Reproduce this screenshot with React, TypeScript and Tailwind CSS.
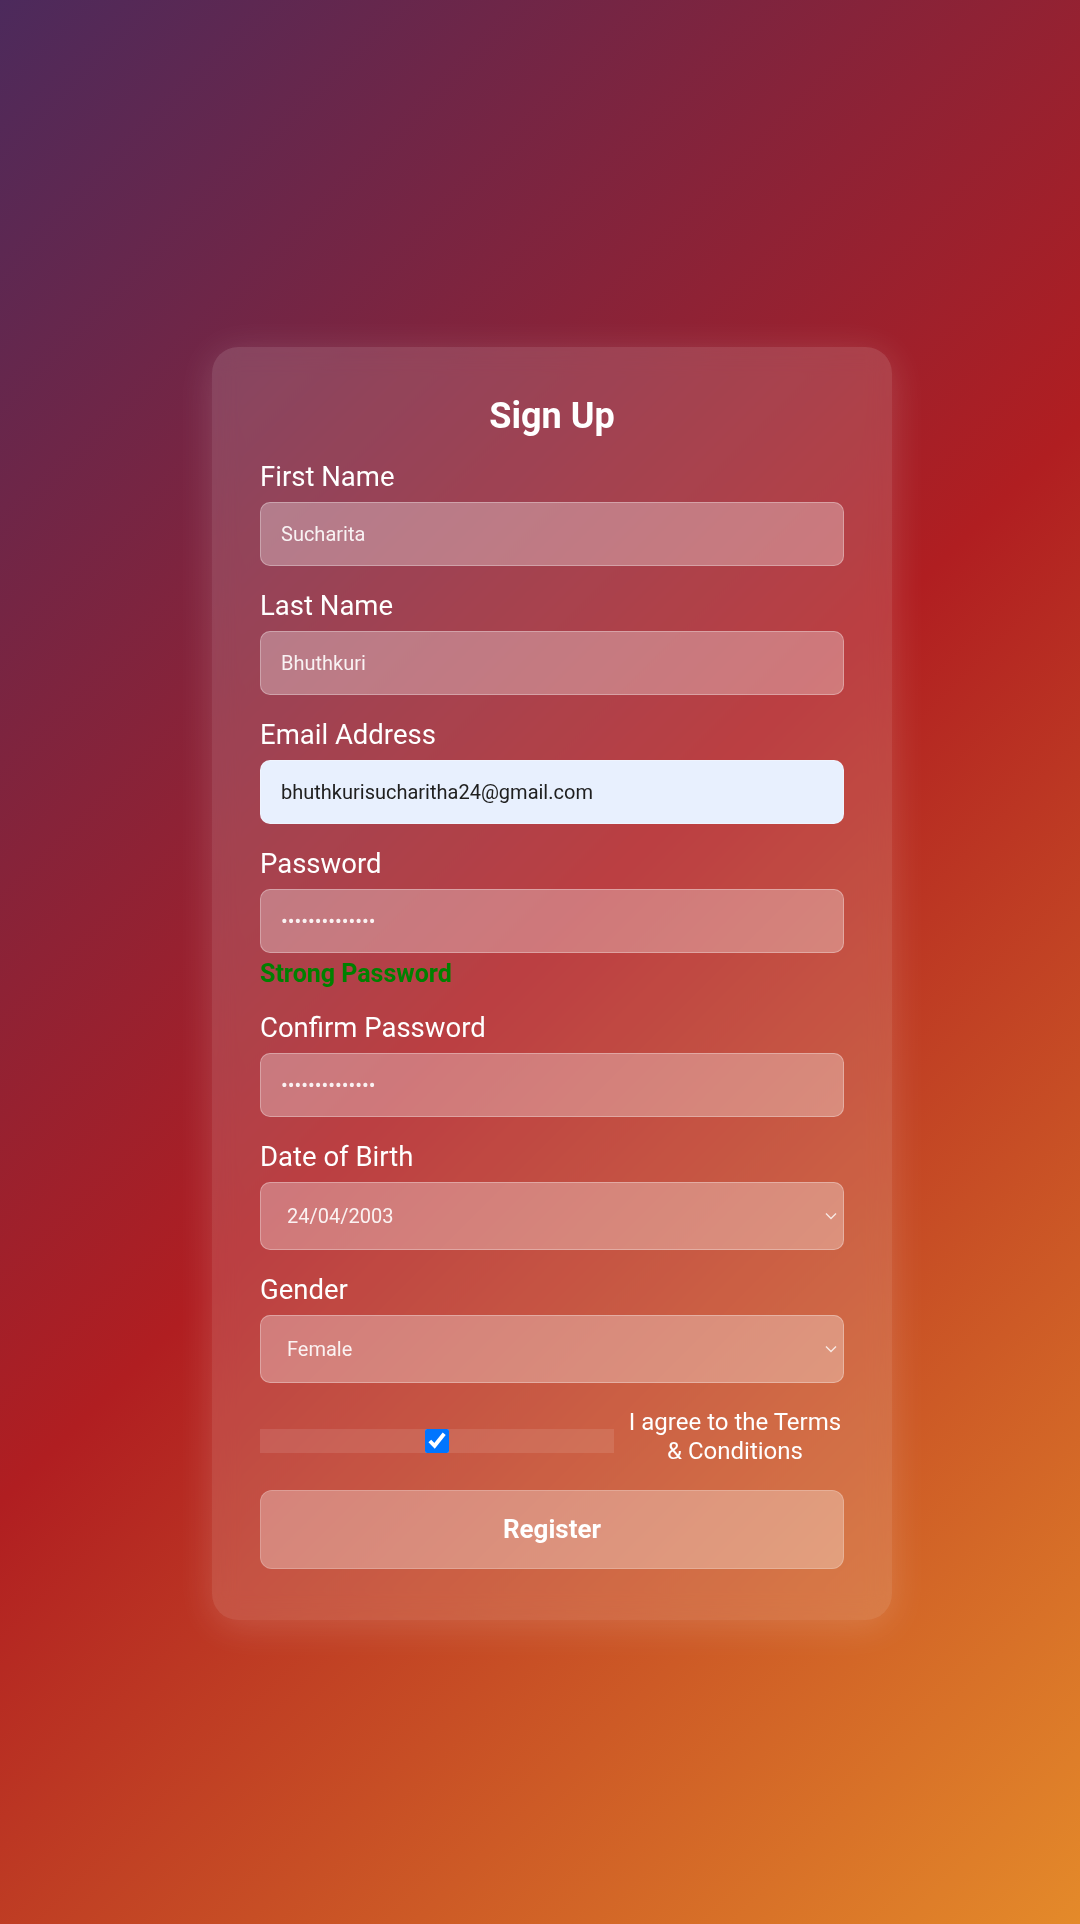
import React from "react";

function Field({ label, children }: { label: string; children: React.ReactNode }) {
  return (
    <div className="mb-[25px]">
      <label className="block text-[27.5px] leading-[30px] text-white mb-[10px]">{label}</label>
      {children}
    </div>
  );
}

const inputCls =
  "block w-full h-[64px] px-[20px] rounded-[10px] border border-white/30 bg-white/30 text-[20px] text-white/90 outline-none";

function Select({ value }: { value: string }) {
  return (
    <div className="relative">
      <select
        defaultValue={value}
        className="block w-full h-[68px] pl-[26px] pr-[40px] rounded-[10px] border border-white/30 bg-white/30 text-[20px] text-white/90 outline-none appearance-none"
      >
        <option value={value}>{value}</option>
      </select>
      {/* native arrow replaced by a drawn chevron */}
      <svg
        className="absolute right-[7px] top-1/2 -translate-y-1/2 pointer-events-none"
        width="12"
        height="8"
        viewBox="0 0 12 8"
        fill="none"
      >
        <polyline points="1,1.5 6,6.5 11,1.5" stroke="rgba(255,255,255,0.8)" strokeWidth="1.4" />
      </svg>
    </div>
  );
}

export default function App() {
  return (
    <div className="min-h-screen w-full bg-[linear-gradient(135deg,#4c2a5c_0%,#b01e21_50%,#e48a2a_100%)] font-[Roboto,sans-serif] flex justify-center pl-[24px] pt-[347px] pb-[304px]">
      <div className="w-[680px] rounded-[26px] bg-white/15 backdrop-blur-md shadow-[0_6px_36px_rgba(255,255,255,0.16)] px-[48px] pt-[48px] pb-[51px]">
        <h2 className="text-center text-[36px] leading-[43px] font-bold text-white mb-[24px]">Sign Up</h2>

        <Field label="First Name">
          <input type="text" defaultValue="Sucharita" className={inputCls} />
        </Field>

        <Field label="Last Name">
          <input type="text" defaultValue="Bhuthkuri" className={inputCls} />
        </Field>

        <Field label="Email Address">
          <input
            type="email"
            defaultValue="bhuthkurisucharitha24@gmail.com"
            className="block w-full h-[64px] px-[20px] rounded-[10px] border border-white/30 bg-[#e8f0fe] text-[20px] text-[#1f1f1f] outline-none"
          />
        </Field>

        <div className="mb-[25px]">
          <label className="block text-[27.5px] leading-[30px] text-white mb-[10px]">Password</label>
          <input type="password" defaultValue="Sucharita@2003" className={inputCls} />
          <p className="mt-[7px] text-[25px] leading-[28px] font-bold text-[#008000]">Strong Password</p>
        </div>

        <Field label="Confirm Password">
          <input type="password" defaultValue="Sucharita@2003" className={inputCls} />
        </Field>

        <Field label="Date of Birth">
          <Select value="24/04/2003" />
        </Field>

        <Field label="Gender">
          <Select value="Female" />
        </Field>

        <div className="flex items-center gap-[12px] mb-[24px]">
          <div className="flex-1 h-[24px] mt-[7px] bg-white/10 flex items-center justify-center">
            <input type="checkbox" defaultChecked className="w-[24px] h-[24px] accent-[#0075ff]" />
          </div>
          <span className="w-[218px] text-center text-[24px] leading-[29px] text-white">
            I agree to the Terms &amp; Conditions
          </span>
        </div>

        <button className="block w-full h-[79px] rounded-[12px] border border-white/20 bg-white/30 text-[26px] font-bold text-white">
          Register
        </button>
      </div>
    </div>
  );
}
